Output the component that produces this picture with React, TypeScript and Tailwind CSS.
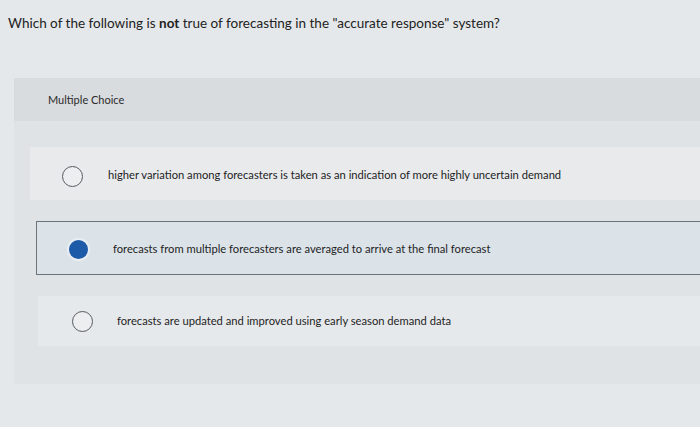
import React from 'react';

const options = [
  { text: 'higher variation among forecasters is taken as an indication of more highly uncertain demand', selected: false },
  { text: 'forecasts from multiple forecasters are averaged to arrive at the final forecast', selected: true },
  { text: 'forecasts are updated and improved using early season demand data', selected: false },
];

export default function App() {
  return (
    <div className="w-[700px] h-[427px] overflow-hidden bg-[#e5e8ea] text-[#222] font-['Lato','Liberation_Sans',sans-serif]">
      <div className="pl-[8px] pt-[14px] h-[78px] text-[13.5px] leading-[18px]">
        Which of the following is <span className="font-bold">not</span> true of forecasting in the "accurate response" system?
      </div>
      <div className="ml-[14px] bg-[#e0e3e6]">
        <div className="h-[43px] bg-[#d9dcdf] pl-[34px] pt-[15px] text-[11px] leading-[14px] text-[#2b2b2b]">
          Multiple Choice
        </div>
        <div className="pt-[26px] pb-[38px] flex flex-col gap-[21px]">
          {options.map((o, i) => (
            <div
              key={i}
              className={
                o.selected
                  ? 'ml-[22px] h-[54px] pt-[2px] bg-[#dbe3e9] border border-[#69747d] border-r-0 flex items-center'
                  : i === 0
                  ? 'ml-[16px] h-[53px] pt-[5px] bg-[#e8eaec] flex items-center'
                  : 'ml-[24px] h-[50px] bg-[#e6e9eb] flex items-center'
              }
            >
              <div className={i === 0 ? 'ml-[32px] w-[21px]' : i === 1 ? 'ml-[30px] w-[23px]' : 'ml-[34px] w-[21px]'}>
                {o.selected ? (
                  <div className="w-[23px] h-[23px] rounded-full bg-[#1d5aa8] border-2 border-[#e9eef2]" />
                ) : (
                  <div className="w-[21px] h-[21px] rounded-full border border-[#555b60] bg-[#eceef0]" />
                )}
              </div>
              <div className={i === 0 ? 'ml-[25px] -mt-[2px] text-[11.2px] text-[#1e1e1e]' : i === 1 ? 'ml-[23px] text-[11.2px] text-[#1e1e1e]' : 'ml-[24px] text-[11.2px] text-[#1e1e1e]'}>
                {o.text}
              </div>
            </div>
          ))}
        </div>
      </div>
    </div>
  );
}
